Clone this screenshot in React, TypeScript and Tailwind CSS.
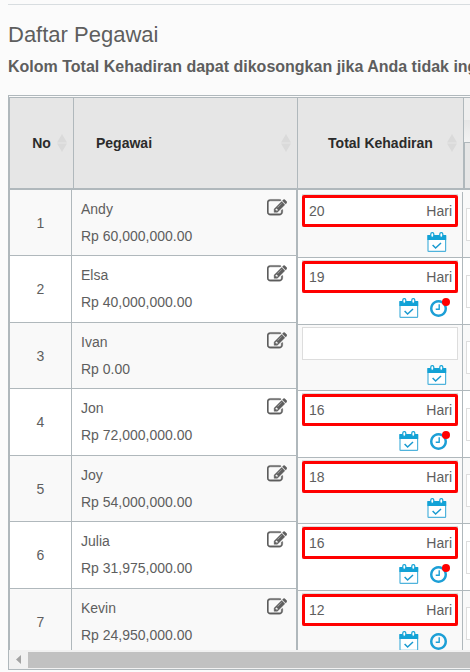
import React from "react";

interface Employee {
  name: string;
  salary: string;
  days: string;
  clock?: "plain" | "alert";
}

const employees: Employee[] = [
  { name: "Andy", salary: "Rp 60,000,000.00", days: "20" },
  { name: "Elsa", salary: "Rp 40,000,000.00", days: "19", clock: "alert" },
  { name: "Ivan", salary: "Rp 0.00", days: "" },
  { name: "Jon", salary: "Rp 72,000,000.00", days: "16", clock: "alert" },
  { name: "Joy", salary: "Rp 54,000,000.00", days: "18" },
  { name: "Julia", salary: "Rp 31,975,000.00", days: "16", clock: "alert" },
  { name: "Kevin", salary: "Rp 24,950,000.00", days: "12", clock: "plain" },
];

const tableClass = "w-full table-fixed border-separate border-spacing-0";
const rowClass = "h-[67px] bg-white odd:h-[66px] odd:bg-[#f9f9f9]";

const EditIcon: React.FC = () => (
  <svg
    viewBox="0 0 1792 1792"
    className="size-5"
    fill="currentColor"
    stroke="currentColor"
    strokeWidth="36"
  >
    <path d="M888 1184l116-116-152-152-116 116v56h96v96h56zm440-720q-16-16-33 1l-350 350q-17 17-1 33t33-1l350-350q17-17 1-33zm80 594v190q0 119-84.5 203.5t-203.5 84.5h-832q-119 0-203.5-84.5t-84.5-203.5v-832q0-119 84.5-203.5t203.5-84.5h832q63 0 117 25 15 7 18 23 3 17-9 29l-49 49q-14 14-32 8-23-6-45-6h-832q-66 0-113 47t-47 113v832q0 66 47 113t113 47h832q66 0 113-47t47-113v-126q0-13 9-22l64-64q15-15 35-7t20 29zm-96-738l288 288-672 672h-288v-288zm444 132l-92 92-288-288 92-92q28-28 68-28t68 28l152 152q28 28 28 68t-28 68z" />
  </svg>
);

const CalendarIcon: React.FC = () => (
  <svg viewBox="0 0 20 20" className="size-5" fill="none">
    <rect x="1" y="3.5" width="17.6" height="15.8" rx="0.6" fill="#fff" stroke="#4fb3dc" strokeWidth="1.2" />
    <path d="M0.4 3h18.8v5H0.4z" fill="#12a2d6" />
    <rect x="3.8" y="0.6" width="3" height="4.8" rx="1.4" fill="#fff" stroke="#12a2d6" strokeWidth="1.2" />
    <rect x="12.8" y="0.6" width="3" height="4.8" rx="1.4" fill="#fff" stroke="#12a2d6" strokeWidth="1.2" />
    <path d="M5.6 13l3 3 5.4-5" stroke="#1a9ad0" strokeWidth="1.5" />
  </svg>
);

const ClockIcon: React.FC = () => (
  <svg viewBox="128 128 1536 1536" className="size-[17px]" fill="#1c9fd6">
    <path d="M1024 544v448q0 14-9 23t-23 9h-320q-14 0-23-9t-9-23v-64q0-14 9-23t23-9h224v-352q0-14 9-23t23-9h64q14 0 23 9t9 23zm416 352q0-148-73-273t-198-198-273-73-273 73-198 198-73 273 73 273 198 198 273 73 273-73 198-198 73-273zm224 0q0 209-103 385.5t-279.5 279.5-385.5 103-385.5-103-279.5-279.5-103-385.5 103-385.5 279.5-279.5 385.5-103 385.5 103 279.5 279.5 103 385.5z" />
  </svg>
);

const SortIcon: React.FC = () => (
  <svg viewBox="0 0 10 18" className="h-[18px] w-[10px]" fill="#dadada">
    <path d="M5 0l5 8.4H0zM5 18l5-8.4H0z" />
  </svg>
);

const SortButton: React.FC<{ label: string; left?: boolean }> = ({
  label,
  left,
}) => (
  <button
    type="button"
    className="grid w-full grid-cols-[10px_1fr_10px] items-center px-1.5 font-bold"
  >
    <span />
    <span className={left ? "pl-1.5 text-left" : "text-center whitespace-nowrap"}>
      {label}
    </span>
    <SortIcon />
  </button>
);

const Attendance: React.FC<{ employee: Employee }> = ({ employee }) => (
  <>
    <label className="relative mr-1 ml-1 flex h-[33px] items-center border border-[#ddd] bg-white pr-[5px] pl-1.5">
      <input
        type="text"
        aria-label={`Total Kehadiran ${employee.name}`}
        defaultValue={employee.days}
        className="w-full min-w-0 bg-transparent outline-none"
      />
      {employee.days && (
        <>
          <span>Hari</span>
          <span className="pointer-events-none absolute -inset-x-px top-0 -bottom-px rounded-xs border-3 border-[#ff0000]" />
        </>
      )}
    </label>
    <div className="flex items-center justify-end gap-[11px] pt-[5px] pr-[15px]">
      <button type="button" aria-label="Kehadiran">
        <CalendarIcon />
      </button>
      {employee.clock && (
        <button type="button" aria-label="Jam" className="relative">
          <ClockIcon />
          {employee.clock === "alert" && (
            <span className="absolute -top-0.5 -right-[3px] size-2 rounded-full bg-[#ff0000]" />
          )}
        </button>
      )}
    </div>
  </>
);

const App: React.FC = () => {
  return (
    <div className="min-h-screen overflow-hidden bg-[#fbfbfb] pt-1 pl-2 font-['Liberation_Sans',Arial,sans-serif] text-sm text-[#5e5e5e]">
      <hr className="border-[#d8dde0]" />
      <h1 className="pt-4 text-[22px] leading-7">Daftar Pegawai</h1>
      <p className="pt-[7px] pb-[18px] text-base leading-[21px] font-bold whitespace-nowrap">
        Kolom Total Kehadiran dapat dikosongkan jika Anda tidak ingi
      </p>

      <div className="border-y border-l border-[#b0b8bc]">
        <table className="mt-px w-full table-fixed border-separate border-spacing-0 border-t border-l border-[#b0b8bc] bg-[#e6e6e6] text-[#2b2b2b]">
          <thead>
            <tr className="h-[92px]">
              <th className="w-16 border-r border-b-2 border-[#b0b8bc] p-0">
                <SortButton label="No" />
              </th>
              <th className="w-56 border-r border-b-2 border-[#b0b8bc] p-0">
                <SortButton label="Pegawai" left />
              </th>
              <th className="w-[166px] border-r border-b-2 border-[#b0b8bc] p-0">
                <SortButton label="Total Kehadiran" />
              </th>
              <th className="border-b-2 border-[#b0b8bc] p-0">
                <div className="h-[22px] bg-[#efefef]" />
                <div className="h-[22px] bg-linear-to-b from-[#e6e6e6] to-[#f3f3f3]" />
                <div className="h-[46px] border-t border-l border-[#b0b8bc]" />
              </th>
            </tr>
          </thead>
        </table>

        <div className="flex h-[460px] overflow-hidden border-l border-[#b0b8bc]">
          <div className="w-[288px] shrink-0 border-r-2 border-[#b0b8bc]">
            <table className={tableClass}>
              <tbody>
                {employees.map((employee, i) => (
                  <tr key={employee.name} className={rowClass}>
                    <td className="w-[62px] border-r border-b border-[#b0b8bc] p-0 text-center">
                      {i + 1}
                    </td>
                    <td className="border-b border-[#b0b8bc] px-[9px] pt-1.5 pb-0 align-top leading-[27px]">
                      <div className="flex items-start justify-between">
                        <span>{employee.name}</span>
                        <button
                          type="button"
                          aria-label={`Edit ${employee.name}`}
                          className="pt-0.5"
                        >
                          <EditIcon />
                        </button>
                      </div>
                      <div>{employee.salary}</div>
                    </td>
                  </tr>
                ))}
              </tbody>
            </table>
          </div>
          <div className="min-w-0 flex-1 bg-[#f9f9f9] pt-0.5">
            <table className={tableClass}>
              <tbody>
                {employees.map((employee) => (
                  <tr key={employee.name} className={rowClass}>
                    <td className="w-[165px] border-r border-b border-[#b0b8bc] px-0 pt-0.5 pb-0 align-top">
                      <Attendance employee={employee} />
                    </td>
                    <td className="border-b border-[#b0b8bc] py-0 pr-0 pl-[3px]">
                      <div className="h-[33px] border-y border-l border-[#ddd] bg-white" />
                    </td>
                  </tr>
                ))}
              </tbody>
            </table>
          </div>
        </div>

        <div className="flex h-[19px] items-center bg-[#f1f1f1]">
          <div className="flex w-[19px] justify-center">
            <svg viewBox="0 0 5 9" className="h-[9px] w-[5px]" fill="#a3a3a3">
              <path d="M5 0v9L0 4.5z" />
            </svg>
          </div>
          <div className="h-4 flex-1 bg-[#c1c1c1]" />
        </div>
      </div>
    </div>
  );
};

export default App;
